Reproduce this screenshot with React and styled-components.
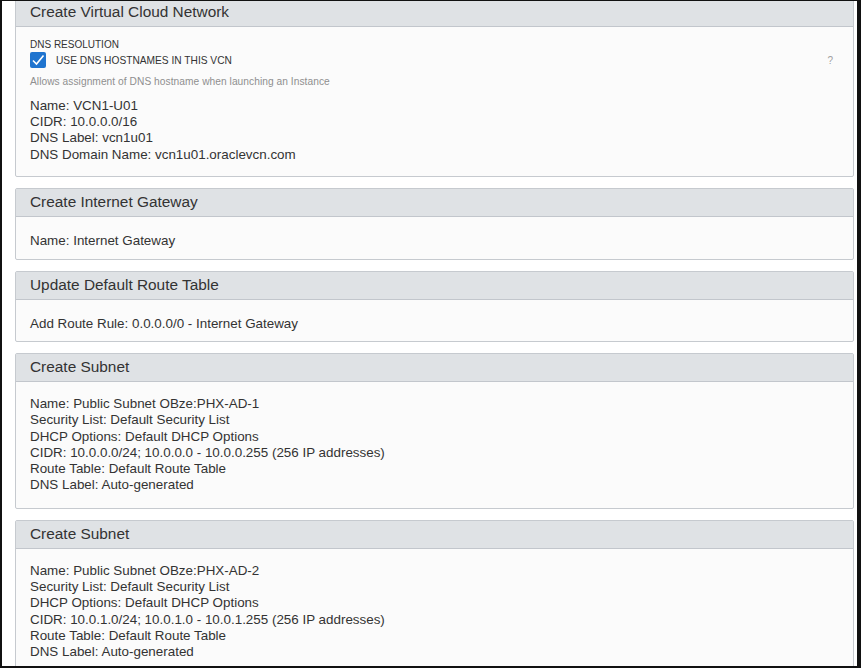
import React from 'react';
import styled, { createGlobalStyle } from 'styled-components';

const GlobalStyle = createGlobalStyle`
    html, body { margin: 0; padding: 0; background: #ffffff; }
    body { font-family: "Liberation Sans", Arial, sans-serif; color: #333333; }
`

const steps = [
    {
        title: 'Create Virtual Cloud Network',
        dns: true,
        lines: [
            'Name: VCN1-U01',
            'CIDR: 10.0.0.0/16',
            'DNS Label: vcn1u01',
            'DNS Domain Name: vcn1u01.oraclevcn.com',
        ],
    },
    { title: 'Create Internet Gateway', lines: ['Name: Internet Gateway'] },
    { title: 'Update Default Route Table', lines: ['Add Route Rule: 0.0.0.0/0 - Internet Gateway'] },
    {
        title: 'Create Subnet',
        lines: [
            'Name: Public Subnet OBze:PHX-AD-1',
            'Security List: Default Security List',
            'DHCP Options: Default DHCP Options',
            'CIDR: 10.0.0.0/24; 10.0.0.0 - 10.0.0.255 (256 IP addresses)',
            'Route Table: Default Route Table',
            'DNS Label: Auto-generated',
        ],
    },
    {
        title: 'Create Subnet',
        lines: [
            'Name: Public Subnet OBze:PHX-AD-2',
            'Security List: Default Security List',
            'DHCP Options: Default DHCP Options',
            'CIDR: 10.0.1.0/24; 10.0.1.0 - 10.0.1.255 (256 IP addresses)',
            'Route Table: Default Route Table',
            'DNS Label: Auto-generated',
        ],
    },
]

function DnsResolution() {
    return (
        <DnsBlock>
            <SmallLabel>DNS RESOLUTION</SmallLabel>
            <CheckRow>
                <CheckBox>
                    <svg width="14" height="12" viewBox="0 0 14 12">
                        <path d="M2 6.5 L5.5 10 L12.5 1.5" fill="none" stroke="#fff" strokeWidth="1.6" />
                    </svg>
                </CheckBox>
                <CheckText>USE DNS HOSTNAMES IN THIS VCN</CheckText>
                <Help>?</Help>
            </CheckRow>
            <HelpText>Allows assignment of DNS hostname when launching an Instance</HelpText>
        </DnsBlock>
    )
}

function StepCard({ step }) {
    const kind = step.dns ? 'dns' : step.lines.length === 1 ? 'single' : 'list';
    return (
        <Card>
            <CardHeader>{step.title}</CardHeader>
            <CardBody $kind={kind}>
                {step.dns && <DnsResolution />}
                {step.lines.map((l, i) => <Line key={i}>{l}</Line>)}
            </CardBody>
        </Card>
    )
}

export default function App() {
    return (
        <>
            <GlobalStyle />
            <Frame>
                <List>
                    {steps.map((s, i) => <StepCard key={i} step={s} />)}
                </List>
            </Frame>
        </>
    )
}

const bodyPadding = {
    dns: '14px 14px 13px',
    single: '16px 14px 9.5px',
    list: '14px 14px 14.5px',
}

const Frame = styled.div`
    box-sizing: border-box;
    width: 861px;
    height: 668px;
    overflow: hidden;
    border-left: 2px solid #111;
    border-top: 1px solid #111;
    border-right: 4px solid #111;
    border-bottom: 2px solid #111;
    background: #fff;
`

const List = styled.div`
    margin: -3px 0 0 13px;
    width: 839px;
    display: flex;
    flex-direction: column;
    gap: 11px;
`

const Card = styled.div`
    border: 1px solid #c6cacf;
    border-radius: 2px;
    background: #fbfbfb;
`

const CardHeader = styled.div`
    height: 28px;
    box-sizing: border-box;
    padding: 0 14px 1px;
    display: flex;
    align-items: center;
    background: #dfe2e5;
    border-bottom: 1px solid #c2c6cc;
    font-size: 15.4px;
    color: #333;
`

const CardBody = styled.div`
    padding: ${p => bodyPadding[p.$kind]};
`

const Line = styled.div`
    font-size: 13.4px;
    line-height: 16.2px;
    color: #333;
`

const DnsBlock = styled.div`
    margin: -2px 0 10px;
`

const SmallLabel = styled.div`
    font-size: 10px;
    line-height: 12px;
    color: #333;
`

const CheckRow = styled.div`
    display: flex;
    align-items: center;
    height: 16px;
    margin-top: 1px;
`

const CheckBox = styled.div`
    width: 16px;
    height: 16px;
    border-radius: 2px;
    background: #1f74cf;
    display: flex;
    align-items: center;
    justify-content: center;
    margin-right: 10px;
`

const CheckText = styled.div`
    font-size: 10.2px;
    color: #333;
    flex: 1;
`

const Help = styled.span`
    font-size: 10px;
    color: #a0a0a0;
    margin-right: 6px;
`

const HelpText = styled.div`
    font-size: 10.2px;
    line-height: 12px;
    letter-spacing: 0.05px;
    color: #8f8f8f;
    margin-top: 8px;
`
